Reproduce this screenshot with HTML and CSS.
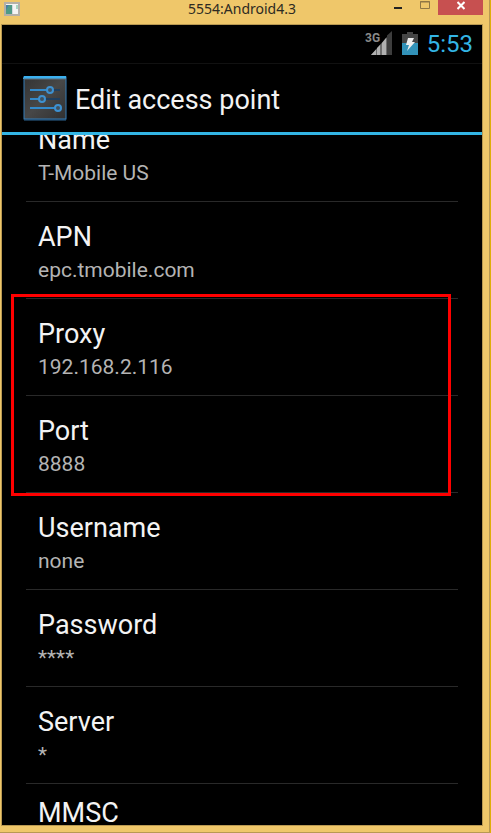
FILE: index.html
```html
<!DOCTYPE html>
<html lang="en">
<head>
<meta charset="utf-8">
<title>5554:Android4.3</title>
<link rel="stylesheet" href="styles.css">
</head>
<body>
<div class="window">
  <header class="titlebar">
    <svg class="app-icon" viewBox="0 0 16 14" aria-hidden="true">
      <rect x="1" y="1" width="14" height="12" fill="#f4f4f4" stroke="#b4b0a8" stroke-width="2"/>
      <rect x="2" y="3" width="6" height="9" fill="#4f9a86"/>
      <path d="M2 3h3L2 8z" fill="#467fa4"/>
      <path d="M12 3h2v4h-2z" fill="#a9d6c4"/>
      <path d="M8 3h1v9H8z" fill="#d3d9de"/>
    </svg>
    <span class="caption">5554:Android4.3</span>
    <div class="controls">
      <button class="control" type="button" aria-label="Minimize"><svg width="10" height="14" viewBox="0 0 10 14"><path d="M1 7h8v2H1z" fill="#222"/></svg></button>
      <button class="control" type="button" aria-label="Maximize" disabled><svg width="10" height="14" viewBox="0 0 10 14"><path d="M.5 1.5h9v7h-9zM0 2h10" fill="none" stroke="#8f7745"/></svg></button>
      <button class="control close" type="button" aria-label="Close"><svg width="8" height="14" viewBox="0 0 8 14"><path d="M.5 2l7 7M7.500 2l-7 7" fill="none" stroke="#fff" stroke-width="2"/></svg></button>
    </div>
  </header>
  <main class="screen">
    <div class="status">
      <svg width="28" height="26" viewBox="0 0 28 26" role="img" aria-label="3G signal">
        <text class="network" x="0" y="11">3G</text>
        <path d="M22 4.500L27 0v24h-5z" fill="#3d3d3d"/>
        <path d="M6 24L22 6v18z" fill="#6d6d6d"/>
        <path d="M6 24l5-5.500V24zM12 24v-7l3-3v10zM17 24V12l4-5v17z" fill="#b0b0b0"/>
      </svg>
      <svg width="16" height="24" viewBox="0 0 16 24" role="img" aria-label="Battery charging">
        <path d="M5 0h6v2h5v9H0V2h5z" fill="#454545"/>
        <path d="M0 11h16v12H0z" fill="#3292b8"/>
        <path d="M6 6h6l-2 4h3L5 19l2-6H4z" fill="#eee"/>
      </svg>
      <time class="clock">5:53</time>
    </div>
    <div class="actionbar">
      <svg width="44" height="46" viewBox="0 0 44 46" aria-hidden="true">
        <defs>
          <linearGradient id="face" x1="0" y1="0" x2="1" y2="1"><stop offset="0" stop-color="#333"/><stop offset=".5" stop-color="#474747"/><stop offset="1" stop-color="#303030"/></linearGradient>
        </defs>
        <path d="M1 44h42v2H1z" fill="#17334a"/>
        <rect x="1" y="2" width="42" height="42" fill="url(#face)" stroke="#367fb9"/>
        <path d="M1 1h42v3H0z" fill="#3bb0ef"/>
        <path d="M1 4h42" stroke="#5d6f7a"/>
        <path d="M28 15h9M20 24h17" stroke="#203f5e" stroke-width="2"/>
        <path d="M7 15h17M7 24h9M7 33h25" stroke="#338acb" stroke-width="2"/>
        <g fill="#41515d" stroke="#3d91d1" stroke-width="2"><circle cx="27" cy="15" r="3"/><circle cx="19" cy="24" r="3"/><circle cx="35" cy="33" r="3"/></g>
      </svg>
      <h1 class="heading">Edit access point</h1>
    </div>
    <div class="viewport">
      <dl class="settings">
        <div class="row"><dt>Name</dt><dd>T-Mobile US</dd></div>
        <div class="row"><dt>APN</dt><dd>epc.tmobile.com</dd></div>
      </dl>
      <dl class="settings highlighted">
        <div class="row"><dt>Proxy</dt><dd>192.168.2.116</dd></div>
        <div class="row"><dt>Port</dt><dd>8888</dd></div>
      </dl>
      <dl class="settings">
        <div class="row"><dt>Username</dt><dd>none</dd></div>
        <div class="row"><dt>Password</dt><dd>****</dd></div>
        <div class="row"><dt>Server</dt><dd>*</dd></div>
        <div class="row last"><dt>MMSC</dt><dd>&nbsp;</dd></div>
      </dl>
    </div>
  </main>
</div>
</body>
</html>
```
FILE: styles.css
```css
* { box-sizing: border-box; }

body {
  margin: 0;
  background: #efc76a;
  color: #f3f3f3;
  font-family: Roboto, "Liberation Sans", sans-serif;
}

.window {
  display: flex;
  flex-direction: column;
  height: 100vh;
  padding: 0 7px 7px 1px;
  border-right: 1px solid #dfae08;
  box-shadow: inset -1px -1px #b89952;
}

.titlebar {
  position: relative;
  display: flex;
  flex: none;
  justify-content: space-between;
  height: 24px;
  padding: 0 0 0 3px;
}

.app-icon {
  width: 16px;
  height: 14px;
  margin-top: 2px;
}

.caption {
  position: absolute;
  left: 0;
  right: 0;
  top: 0;
  color: #2d2a22;
  font-family: "Noto Sans", sans-serif;
  font-size: 14px;
  line-height: 18px;
  text-align: center;
}

.controls {
  position: relative;
  display: flex;
  height: 15px;
}

.control {
  display: flex;
  justify-content: center;
  width: 27px;
  height: 15px;
  padding: 0;
  border: 0;
  background: none;
}

.close {
  width: 45px;
  background: #c75050;
}

.screen {
  display: flex;
  flex: 1;
  flex-direction: column;
  min-height: 0;
  border: 1px solid #b99952;
  background: #000;
}

.status {
  display: flex;
  flex: none;
  align-items: center;
  justify-content: flex-end;
  gap: 9px;
  height: 39px;
  padding-right: 9px;
  border-bottom: 1px solid #111;
}

.network {
  fill: #8a8a8a;
  font-size: 12px;
  font-weight: 700;
}

.clock {
  color: #33b5e5;
  font-size: 24px;
  line-height: 38px;
}

.actionbar {
  display: flex;
  flex: none;
  align-items: center;
  gap: 8px;
  height: 71px;
  padding-left: 21px;
  border-bottom: 3px solid #33b5e5;
}

.heading {
  margin: 0;
  padding-top: 4px;
  font-size: 27px;
  font-weight: 400;
  line-height: 32px;
}

.viewport {
  flex: 1;
  min-height: 0;
  padding: 0 24px;
  overflow: hidden;
}

.settings { margin: 0; }

.viewport > .settings:first-child { margin-top: -30px; }

.row {
  height: 97px;
  padding: 19px 12px 0;
  border-bottom: 1px solid #292929;
}

.last { padding-top: 13px; }

dt {
  font-size: 27px;
  line-height: 32px;
}

dd {
  margin: 0;
  color: #b4b4b4;
  font-size: 21px;
  line-height: 34px;
}

.highlighted { position: relative; }

.highlighted::after {
  content: "";
  position: absolute;
  inset: -5px 7px -3px -15px;
  border: 3px solid #f00;
}
```
